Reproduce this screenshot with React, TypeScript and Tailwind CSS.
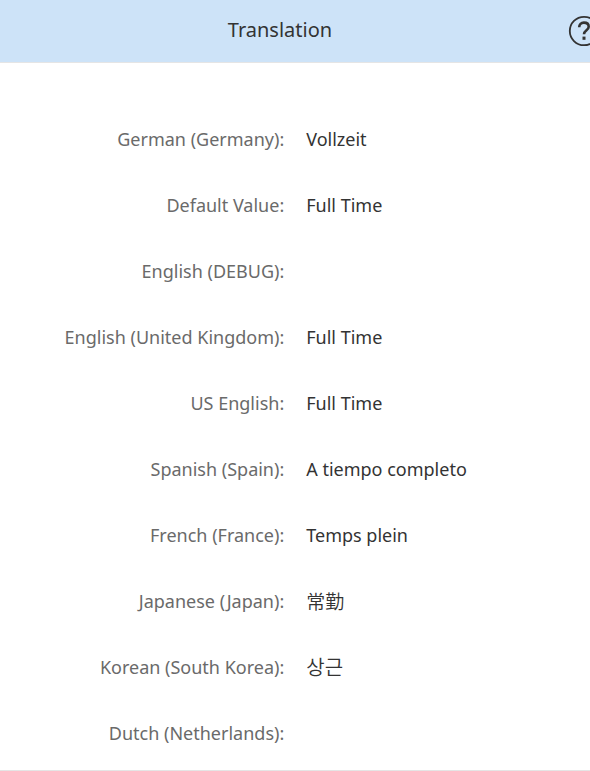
import React from 'react'

interface Translation {
  locale: string
  value: string
  lang?: string
}

const translations: Translation[] = [
  { locale: 'German (Germany)', value: 'Vollzeit', lang: 'de' },
  { locale: 'Default Value', value: 'Full Time' },
  { locale: 'English (DEBUG)', value: '' },
  { locale: 'English (United Kingdom)', value: 'Full Time' },
  { locale: 'US English', value: 'Full Time' },
  { locale: 'Spanish (Spain)', value: 'A tiempo completo', lang: 'es' },
  { locale: 'French (France)', value: 'Temps plein', lang: 'fr' },
  { locale: 'Japanese (Japan)', value: '常勤', lang: 'ja' },
  { locale: 'Korean (South Korea)', value: '상근', lang: 'ko' },
  { locale: 'Dutch (Netherlands)', value: '', lang: 'nl' }
]

const HelpIcon: React.FC = () => (
  <svg className="size-8" viewBox="0 0 32 32" fill="none" stroke="currentColor" aria-hidden="true">
    <circle cx="16" cy="16" r="14.2" strokeWidth={1.8} />
    <path d="M11.2 12.2c0-2.8 1.9-4.6 4.7-4.6 2.9 0 4.8 1.6 4.8 4.1 0 3.6-4.7 3.4-4.7 7.6" strokeWidth={2.6} />
    <path d="M16 21.6v3.2" strokeWidth={3} />
  </svg>
)

const TranslationRow: React.FC<Translation> = ({ locale, value, lang }) => (
  <>
    <dt className="text-right text-[#6a6a6a]">{locale}:</dt>
    <dd
      className="text-[#333333] [&:lang(ja)]:font-['Noto_Sans_CJK_JP',sans-serif] [&:lang(ja)]:text-[19px] [&:lang(ja)]:font-[350] [&:lang(ko)]:font-['Noto_Sans_CJK_KR',sans-serif] [&:lang(ko)]:text-[20px] [&:lang(ko)]:font-[350]"
      lang={lang}
    >
      {value}
    </dd>
  </>
)

export default function App() {
  return (
    <section className="overflow-hidden border-b border-[#e5e5e5] bg-white pb-1 font-['Noto_Sans','Noto_Sans_CJK_JP','Noto_Sans_CJK_KR',sans-serif]">
      <header className="flex h-[63px] items-center border-b border-[#e5e5e5] bg-[#cde3f8] text-[#333333]">
        <h1 className="flex-1 pr-2 pb-0.5 text-center text-[20px]">Translation</h1>
        <button type="button" aria-label="Help" className="-mr-[10px] shrink-0">
          <HelpIcon />
        </button>
      </header>
      <dl className="grid auto-rows-[66px] grid-cols-[48%_1fr] items-center gap-x-[22px] pt-[43px] pl-0.5 text-[18px]">
        {translations.map((item) => (
          <TranslationRow key={item.locale} {...item} />
        ))}
      </dl>
    </section>
  )
}
